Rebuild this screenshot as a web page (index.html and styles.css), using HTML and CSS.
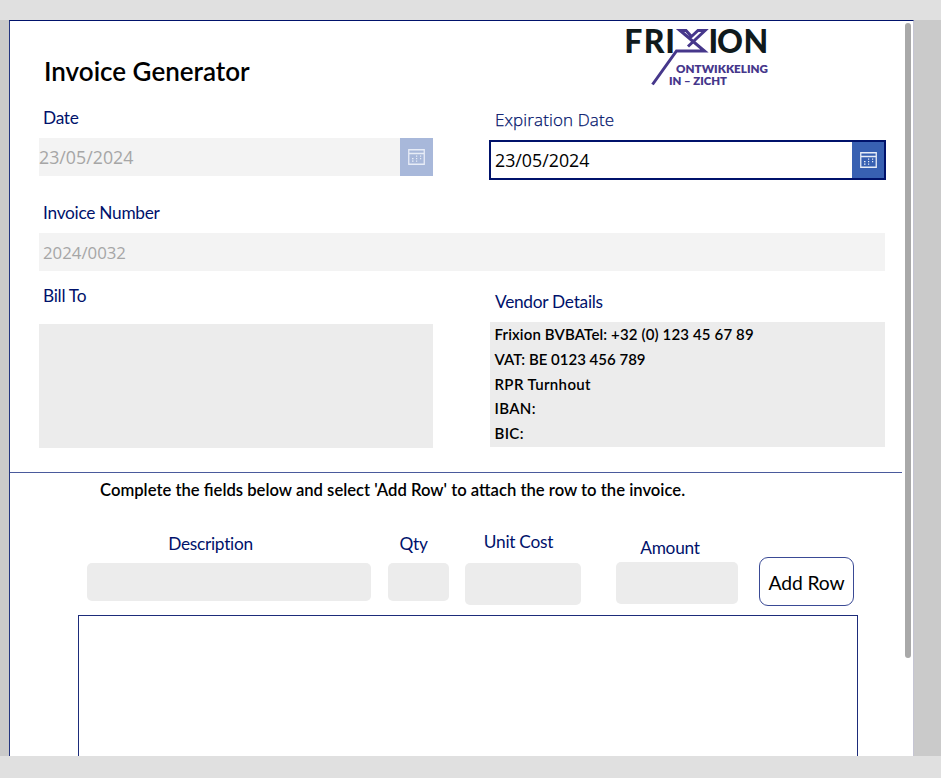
FILE: index.html
```html
<!DOCTYPE html>
<html lang="en">
<head>
<meta charset="utf-8">
<title>Invoice Generator</title>
<link rel="stylesheet" href="styles.css">
</head>
<body>
<svg class="defs" width="0" height="0">
  <symbol id="calendar" viewBox="0 0 17 16">
    <path d="M.75 .75h15.500v14.500H.75zM.5 4.500h16" fill="none" stroke="currentColor" stroke-width="1.3"/>
    <path d="M4 9h1.500v1.300H4zM4 11.500h1.500v1.300H4zM8 6.500h1.200v1.200H8zM8 9h1.200v1.300H8zM8 11.500h1.200v1.300H8zM12 6.500h1.200v1.200H12zM12 9h1.200v1.300H12z" fill="currentColor"/>
  </symbol>
</svg>
<div class="stage">
  <main class="screen">
    <div class="content">
      <section class="columns">
        <div class="left">
          <h1 class="title">Invoice Generator</h1>
          <div class="label label-date">Date</div>
          <div class="date-field disabled"><span class="date-text">23/05/2024</span><span class="date-button"><svg><use href="#calendar"/></svg></span></div>
          <div class="label label-number">Invoice Number</div>
        </div>
        <div class="right">
          <svg class="logo" width="146" height="62" viewBox="624 26 146 62">
            <g class="logo-word">
              <text x="624.2 643.7 665.2" y="52.700">FRI</text>
              <text x="708.4 717 743.5" y="52.700">ION</text>
            </g>
            <path class="logo-mark" d="M652.500 84.500L676.500 51H704.500L680 30.500H686L691.500 36.500L698 30.500H705L688 46.500"/>
            <g class="logo-tag">
              <text x="676" y="72.600" textLength="92" lengthAdjust="spacingAndGlyphs">ONTWIKKELING</text>
              <text x="669" y="84.800" textLength="58" lengthAdjust="spacingAndGlyphs">IN – ZICHT</text>
            </g>
          </svg>
          <div class="label label-expiration">Expiration Date</div>
          <div class="date-field active"><span class="date-text">23/05/2024</span><span class="date-button"><svg><use href="#calendar"/></svg></span></div>
        </div>
      </section>
      <div class="number-field">2024/0032</div>
      <section class="columns parties">
        <div class="left">
          <div class="label label-bill">Bill To</div>
          <div class="bill-box"></div>
        </div>
        <div class="right">
          <div class="label label-vendor">Vendor Details</div>
          <div class="vendor-box">
            <div class="wide">Frixion BVBATel: +32 (0) 123 45 67 89</div>
            <div>VAT: BE 0123 456 789</div>
            <div class="wider">RPR Turnhout</div>
            <div class="wider">IBAN:</div>
            <div class="wider">BIC:</div>
          </div>
        </div>
      </section>
      <section class="rows">
        <p class="hint">Complete the fields below and select 'Add Row' to attach the row to the invoice.</p>
        <div class="entry">
          <div class="cell description"><div class="label">Description</div><div class="input"></div></div>
          <div class="cell qty"><div class="label">Qty</div><div class="input"></div></div>
          <div class="cell cost"><div class="label">Unit Cost</div><div class="input"></div></div>
          <div class="cell amount"><div class="label">Amount</div><div class="input"></div></div>
          <button class="add">Add Row</button>
        </div>
        <div class="gallery"></div>
      </section>
    </div>
    <div class="scroll"><div class="thumb"></div></div>
  </main>
</div>
</body>
</html>
```
FILE: styles.css
```css
* { box-sizing: border-box; }
body { margin: 0; height: 778px; padding: 20px 0 22px; background: #e0e0e0; overflow: hidden; font-family: Lato, sans-serif; }
.defs { position: absolute; }
.stage { height: 736px; background: #cacaca; padding-left: 9px; }
.screen { width: 905px; height: 736px; display: flex; background: #fff; border-top: 1px solid #00126b; border-left: 1px solid #24357f; border-right: 1px solid #c5c5d3; overflow: hidden; }
.content { width: 892px; height: 735px; display: flex; flex-direction: column; }
.scroll { padding: 2px 0 0 3px; }
.thumb { width: 6px; height: 635px; border-radius: 3px; background: #a9a9a9; }
.columns { display: grid; grid-template-columns: 394px 396px; column-gap: 57px; padding-left: 29px; height: 212px; flex: none; }
.title { margin: 35px 0 0 5px; font-size: 26px; line-height: 30px; font-weight: 600; color: #000; white-space: nowrap; }
.label { height: 24px; font-size: 17.300px; line-height: 24px; font-weight: 400; letter-spacing: -.27px; color: #00126b; padding: 1px 0 0 4px; white-space: nowrap; font-variant-ligatures: none; }
.label-date { margin-top: 19px; }
.label-number { margin-top: 24px; }
.date-field { display: flex; font-family: "Open Sans", sans-serif; font-size: 17.800px; }
.date-text { flex: 1; }
.date-button { display: flex; align-items: center; justify-content: center; color: #e8edf7; }
.date-button svg { width: 17px; height: 16px; }
.disabled { margin-top: 9px; height: 38px; line-height: 38px; background: #f3f3f3; color: #a6a6a6; }
.disabled .date-button { width: 33px; background: #a8b8da; }
.active { width: 397px; height: 40px; margin: 8px 0 0 -1px; line-height: 37px; border: 2px solid #00126b; background: #fff; color: #000; }
.active .date-text { padding-left: 4px; }
.active .date-button { width: 32px; background: #3860b2; }
.logo { display: block; margin: 5px 0 0 134px; overflow: visible; }
.logo-word { font: 900 32px Lato, sans-serif; fill: #101a1c; }
.logo-tag { font: 800 11.200px Lato, sans-serif; fill: #46378b; }
.logo-mark { fill: none; stroke: #46378b; stroke-width: 3; }
.label-expiration { margin-top: 20px; padding: 0 0 0 5px; font: 300 17px/24px "Open Sans", sans-serif; letter-spacing: .12px; -webkit-text-stroke: .25px #00126b; }
.number-field { width: 846px; height: 38px; margin-left: 29px; padding-left: 4px; flex: none; background: #f3f3f3; color: #a6a6a6; font: 16.800px/39px "Open Sans", sans-serif; }
.parties { height: 201px; }
.label-bill { margin-top: 12px; }
.bill-box { margin-top: 17px; height: 124px; background: #ececec; }
.label-vendor { margin-top: 18px; padding-left: 5px; }
.vendor-box { width: 395px; height: 125px; margin-top: 9px; padding: 0 0 0 4.500px; background: #ececec; color: #000; font-size: 15px; font-weight: 600; line-height: 24.800px; white-space: nowrap; font-variant-ligatures: none; }
.wide { letter-spacing: .14px; }
.wider { letter-spacing: .35px; }
.rows { height: 284px; flex: none; border-top: 1px solid #4a5a9c; }
.hint { margin: 5px 0 0 90px; font-size: 16.650px; line-height: 24px; font-weight: 600; color: #000; white-space: nowrap; }
.entry { display: flex; height: 113px; padding-left: 77px; }
.cell .label { padding: 1px 0 0; text-align: center; }
.input { background: #ececec; border-radius: 5px; }
.description { width: 284px; padding-top: 29px; }
.description .label { padding-right: 37px; }
.description .input { height: 38px; margin-top: 8px; }
.qty { width: 61px; margin-left: 17px; padding-top: 29px; }
.qty .label { padding-right: 10px; }
.qty .input { height: 38px; margin-top: 8px; }
.cost { width: 116px; margin-left: 16px; padding-top: 27px; }
.cost .label { padding-right: 9px; }
.cost .input { height: 42px; margin-top: 10px; }
.amount { width: 122px; margin-left: 35px; padding-top: 33px; }
.amount .label { padding-right: 14px; }
.amount .input { height: 42px; margin-top: 3px; }
.add { width: 95px; height: 49px; margin: 55px 0 0 21px; padding: 3px 0 0; background: #fff; border: 1px solid #3a4a95; border-radius: 9px; font: 19.300px/30px Lato, sans-serif; letter-spacing: -.1px; color: #000; white-space: nowrap; }
.gallery { width: 780px; height: 160px; margin-left: 68px; border: 1px solid #1d2c7a; border-bottom: 0; }
```
